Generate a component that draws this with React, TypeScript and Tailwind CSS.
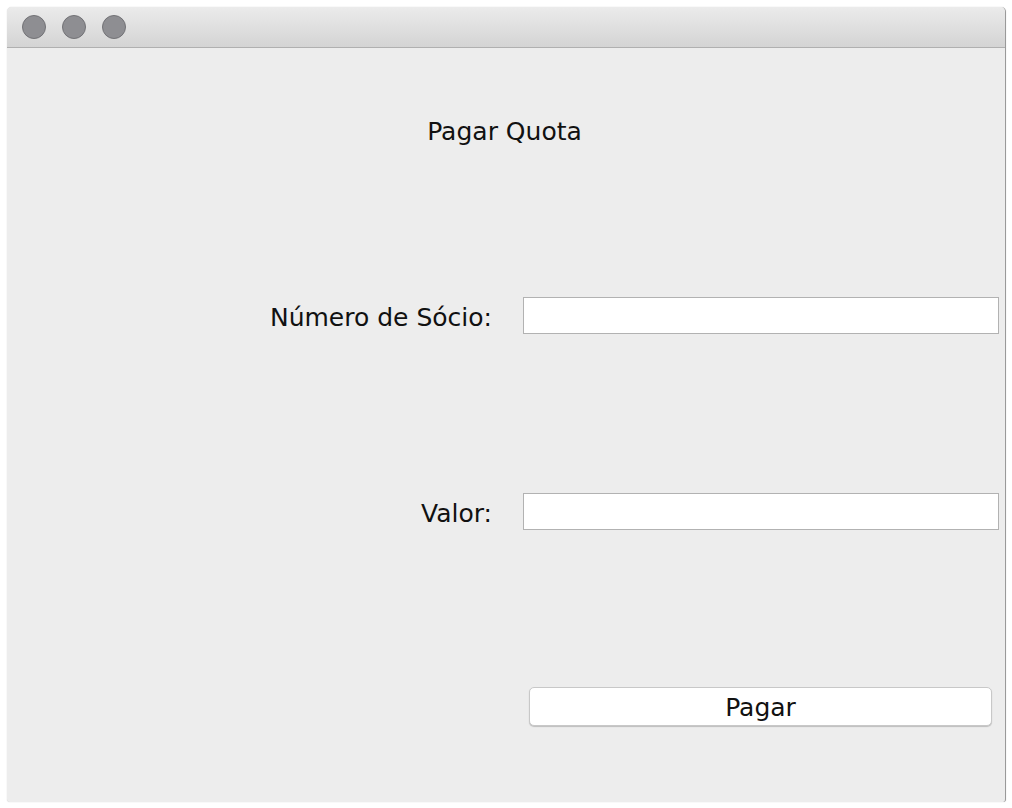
import React from "react";

export default function App() {
  const font = { fontFamily: '"DejaVu Sans", "Liberation Sans", sans-serif' };
  return (
    <div className="w-[1012px] h-[808px] bg-white pt-[7px] pl-[7px]" style={font}>
      <div className="w-[999px] h-[795px] flex flex-col rounded-t-[5px] rounded-b-[3px] overflow-hidden bg-[#ededed] border-r border-r-[#9a9a9a] shadow-[0_0_1px_rgba(0,0,0,0.25)]">
        <div className="h-[41px] shrink-0 flex items-center pl-[15px] gap-[16px] bg-gradient-to-b from-[#ebebeb] to-[#d4d4d4] border-b border-b-[#b0b0b0]">
          <div className="w-[24px] h-[24px] rounded-full bg-[#8e8e92] border border-[#727276]" />
          <div className="w-[24px] h-[24px] rounded-full bg-[#8e8e92] border border-[#727276]" />
          <div className="w-[24px] h-[24px] rounded-full bg-[#8e8e92] border border-[#727276]" />
        </div>
        <div className="flex flex-col text-[#111] text-[25px]">
          <div className="mt-[70px] h-[28px] leading-[28px] text-center pr-[3px]">Pagar Quota</div>
          <div className="mt-[151px] flex items-center h-[37px]">
            <div className="w-[485px] text-right leading-[28px] pt-[5px]">Número de Sócio:</div>
            <div className="ml-[31px] w-[476px] h-[37px] bg-white border border-[#b2b2b2]" />
          </div>
          <div className="mt-[159px] flex items-center h-[37px]">
            <div className="w-[485px] text-right leading-[28px] pt-[4px]">Valor:</div>
            <div className="ml-[31px] w-[476px] h-[37px] bg-white border border-[#b2b2b2]" />
          </div>
          <div className="mt-[157px] ml-[522px] w-[463px] h-[39px] bg-white rounded-[5px] border border-[#c8c8c8] shadow-[0_1px_1px_rgba(0,0,0,0.2)] flex items-center justify-center leading-[28px] pt-[3px]">
            Pagar
          </div>
        </div>
      </div>
    </div>
  );
}
